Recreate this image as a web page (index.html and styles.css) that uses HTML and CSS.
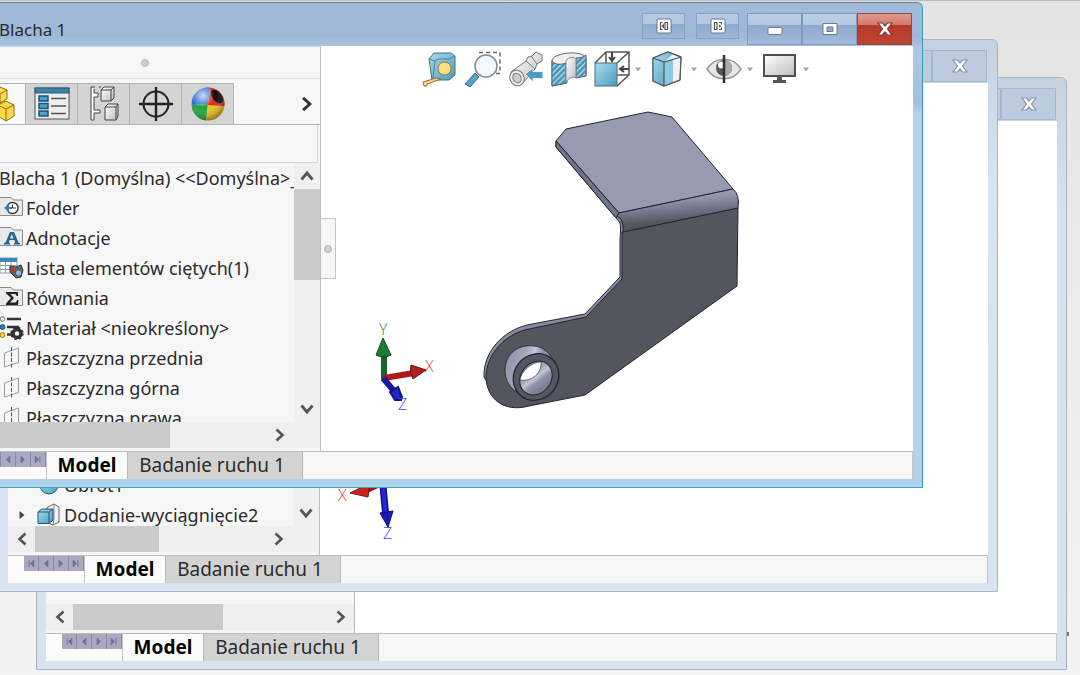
FILE: index.html
```html
<!DOCTYPE html>
<html lang="pl">
<head>
<meta charset="utf-8">
<meta name="viewport" content="width=device-width, initial-scale=1">
<title>Blacha 1</title>
<link rel="stylesheet" href="styles.css">
</head>
<body>
<svg class="defs" aria-hidden="true">
  <defs>
    <linearGradient id="bend" x1="0" y1="0" x2=".22" y2="1"><stop offset=".3" stop-color="#9599af"/><stop offset=".62" stop-color="#6d7083"/><stop offset=".82" stop-color="#53555f"/></linearGradient>
    <linearGradient id="tube" x1="0" y1=".3" x2="1" y2=".6"><stop offset="0" stop-color="#8f94ab"/><stop offset=".35" stop-color="#a4a8bc"/><stop offset=".5" stop-color="#c3c6d2"/><stop offset=".65" stop-color="#8f93a8"/><stop offset="1" stop-color="#75788b"/></linearGradient>
    <linearGradient id="blue" x1="0" y1="0" x2="1" y2="1"><stop offset="0" stop-color="#a9dcf0"/><stop offset="1" stop-color="#4c9abd"/></linearGradient>
    <linearGradient id="grey" x1="0" y1="0" x2="1" y2="1"><stop offset="0" stop-color="#ffffff"/><stop offset="1" stop-color="#bcbcbc"/></linearGradient>
    <radialGradient id="shine" cx=".35" cy=".25" r=".8"><stop offset="0" stop-color="#fff" stop-opacity=".75"/><stop offset=".45" stop-color="#fff" stop-opacity="0"/><stop offset="1" stop-color="#000" stop-opacity=".45"/></radialGradient>
    <pattern id="hatch" width="4" height="4" patternUnits="userSpaceOnUse" patternTransform="rotate(45)"><rect width="4" height="4" fill="#4b94b8"/><rect width="1.3" height="4" fill="#b7e0f0"/></pattern>
  </defs>
  <symbol id="i-right" viewBox="0 0 16 16"><path d="M4.500 2.500 10.500 8 4.500 13.500" fill="none" stroke="currentColor" stroke-width="2.600"/></symbol>
  <symbol id="i-left" viewBox="0 0 16 16"><path d="M11.500 2.500 5.500 8 11.500 13.500" fill="none" stroke="currentColor" stroke-width="2.600"/></symbol>
  <symbol id="i-up" viewBox="0 0 16 16"><path d="M2.500 11.500 8 5 13.500 11.500" fill="none" stroke="currentColor" stroke-width="2.800"/></symbol>
  <symbol id="i-down" viewBox="0 0 16 16"><path d="M2.500 4.500 8 11 13.500 4.500" fill="none" stroke="currentColor" stroke-width="2.800"/></symbol>
  <symbol id="i-drop" viewBox="0 0 8 5"><path d="M1 .5h6L4 4.500z" fill="#a3a3a3"/></symbol>
  <symbol id="i-first" viewBox="0 0 15 15"><path d="M5.500 4v7M10.500 4 7 7.500l3.500 3.500z" fill="#71718f" stroke="#71718f"/></symbol>
  <symbol id="i-prev" viewBox="0 0 15 15"><path d="M9.500 4 6 7.500 9.500 11z" fill="#71718f" stroke="#71718f"/></symbol>
  <symbol id="i-next" viewBox="0 0 15 15"><path d="M5.500 4 9 7.500 5.500 11z" fill="#71718f" stroke="#71718f"/></symbol>
  <symbol id="i-last" viewBox="0 0 15 15"><path d="M9.500 4v7M4.500 4 8 7.500 4.500 11z" fill="#71718f" stroke="#71718f"/></symbol>
  <symbol id="i-close" viewBox="0 0 18 16"><path d="M2 2h4.500L9 5l2.500-3H16l-4.500 6 4.500 6h-4.500L9 11l-2.500 3H2l4.500-6z" fill="#fff" stroke="currentColor" stroke-width="1.200"/></symbol>
  <symbol id="i-folder" viewBox="0 0 24 22"><path d="M-2 3V1.500h13L13.500 4H22.500V19.500H-2z" fill="#e9e9e9" stroke="#8a8a8a"/></symbol>
  <symbol id="i-plane" viewBox="0 0 24 24"><path d="M4.500 7 18.500 2v14.500l-14 4.500z" fill="none" stroke="#999"/><path d="M11.500 1v21" stroke="#555" stroke-dasharray="4 1.500"/></symbol>
</svg>

<main class="desktop">
  <i class="speck"></i>
  <section class="window window-back" aria-label="Okno 3">
    <header class="titlebar">
      <div class="win-buttons"><button class="win-btn" aria-label="Minimalizuj"></button><button class="win-btn" aria-label="Maksymalizuj"></button><button class="win-btn" aria-label="Zamknij"><svg class="x-icon"><use href="#i-close"/></svg></button></div>
    </header>
    <div class="body">
      <aside class="side">
        <div class="fill"></div>
        <div class="hscroll">
          <button class="arrow" aria-label="W lewo"><svg><use href="#i-left"/></svg></button><div class="track"><div class="thumb thumb-long"></div></div><button class="arrow" aria-label="W prawo"><svg><use href="#i-right"/></svg></button>
        </div>
      </aside>
      <div class="canvas"></div>
    </div>
    <footer class="tabs">
      <div class="nav"><button aria-label="Pierwsza"><svg><use href="#i-first"/></svg></button><button aria-label="Poprzednia"><svg><use href="#i-prev"/></svg></button><button aria-label="Następna"><svg><use href="#i-next"/></svg></button><button aria-label="Ostatnia"><svg><use href="#i-last"/></svg></button></div>
      <button class="tab tab-on">Model</button><button class="tab">Badanie ruchu 1</button>
    </footer>
  </section>

  <section class="window window-mid" aria-label="Okno 2">
    <header class="titlebar">
      <div class="win-buttons"><button class="win-btn" aria-label="Minimalizuj"></button><button class="win-btn" aria-label="Maksymalizuj"></button><button class="win-btn" aria-label="Zamknij"><svg class="x-icon"><use href="#i-close"/></svg></button></div>
    </header>
    <div class="body">
      <aside class="side">
        <div class="tree-area">
          <ul class="tree tree-end">
            <li><span class="twist"></span><svg class="icon" viewBox="0 0 24 24"><circle cx="12" cy="12" r="9" fill="url(#blue)" stroke="#235b75"/><ellipse cx="12" cy="10" rx="4" ry="3" fill="#dff2fa"/></svg>Obrót1</li>
            <li><span class="twist"><svg viewBox="0 0 8 10"><path d="M1.500 1 6.500 5 1.500 9z" fill="#444"/></svg></span><svg class="icon" viewBox="0 0 24 24"><path d="M10 4.500 17 1l5 3v15l-6 3-6-3z" fill="#f5f5f5" stroke="#666"/><path d="M17 1v15l-1 6" fill="none" stroke="#888"/><path d="M1 9l4-3h11v11l-4 3.500H1z" fill="url(#blue)" stroke="#235b75"/><path d="M1 9h11v11M12 9l4-3" fill="none" stroke="#235b75"/></svg>Dodanie-wyciągnięcie2</li>
          </ul>
          <div class="vscroll"><span class="vspace"></span><button class="arrow-v" aria-label="W dół"><svg><use href="#i-down"/></svg></button></div>
        </div>
        <div class="hscroll">
          <button class="arrow" aria-label="W lewo"><svg><use href="#i-left"/></svg></button><div class="track"><div class="thumb"></div></div><button class="arrow" aria-label="W prawo"><svg><use href="#i-right"/></svg></button>
        </div>
      </aside>
      <div class="canvas canvas-mid">
        <svg class="triad" viewBox="0 0 80 80" role="img" aria-label="Układ osi">
          <path d="M62 8 40 18" stroke="#a01414" stroke-width="6"/><path d="M50 8 30 18 48 22z" fill="#cf2020" stroke="#7c1010"/>
          <path d="M62 0 66 43" stroke="#101080" stroke-width="7"/><path d="M62 0 66 43" stroke="#2525e0" stroke-width="4"/><path d="M60 38 73 36 68 52z" fill="#1b1bb0" stroke="#0c0c68"/>
          <text x="18" y="26" class="axis" fill="#e03a3a">X</text><text x="63" y="64" class="axis" fill="#4545e8">Z</text>
        </svg>
      </div>
    </div>
    <footer class="tabs">
      <div class="nav"><button aria-label="Pierwsza"><svg><use href="#i-first"/></svg></button><button aria-label="Poprzednia"><svg><use href="#i-prev"/></svg></button><button aria-label="Następna"><svg><use href="#i-next"/></svg></button><button aria-label="Ostatnia"><svg><use href="#i-last"/></svg></button></div>
      <button class="tab tab-on">Model</button><button class="tab">Badanie ruchu 1</button>
    </footer>
  </section>

  <section class="window window-front" aria-label="Blacha 1">
    <header class="titlebar">
      <h1 class="title">Blacha 1</h1>
      <div class="pane-buttons">
        <button class="pane-btn" aria-label="Panel lewy"><svg viewBox="0 0 16 16"><rect x="1" y="1" width="14" height="14" rx="1" fill="#fff" stroke="#6f7684"/><path d="M6.500 4.500H4.500v7h2M9 4.500h2.500v7H9z" fill="none" stroke="#555" stroke-width="1.200"/><path d="M8 5.500 5.500 8 8 10.500z" fill="#555"/></svg></button>
        <button class="pane-btn" aria-label="Panel prawy"><svg viewBox="0 0 16 16"><rect x="1" y="1" width="14" height="14" rx="1" fill="#fff" stroke="#6f7684"/><path d="M4.500 4.500H7v7H4.500zM9 4.500h2.500v2M9 11.500h2.500v-2" fill="none" stroke="#555" stroke-width="1.200"/><path d="M9 6.500 11.500 8 9 9.500z" fill="#555"/></svg></button>
      </div>
      <div class="win-buttons">
        <button class="win-btn" aria-label="Minimalizuj"><svg class="min-icon" viewBox="0 0 16 16"><rect x="1" y="6.500" width="14" height="7" rx="1" fill="#fff" stroke="#6f7684"/></svg></button>
        <button class="win-btn" aria-label="Maksymalizuj"><svg class="min-icon" viewBox="0 0 16 16"><path fill-rule="evenodd" d="M1 2.500h14v11H1zM5 6v4.500h6V6z" fill="#fff" stroke="#6f7684"/></svg></button>
        <button class="win-btn win-close" aria-label="Zamknij"><svg class="x-icon"><use href="#i-close"/></svg></button>
      </div>
    </header>
    <div class="body">
      <aside class="side">
        <div class="grip"><i class="dot"></i></div>
        <div class="managers">
          <button class="manager manager-on" aria-label="Drzewo operacji"><svg viewBox="0 0 38 38"><g fill="#ffd84a" stroke="#8c6a0c"><path d="M11 5l7-3 7 3v9l-7 4-7-4z"/><path d="M11 5l7 4 7-4M18 9v9" fill="none"/><path d="M16 20l8-4 8 4v11l-8 5-8-5z"/><path d="M16 20l8 4 8-4M24 24v12" fill="none"/></g></svg></button>
          <button class="manager" aria-label="Właściwości"><svg viewBox="0 0 38 38"><rect x="2" y="3" width="34" height="31" fill="#eee" stroke="#555"/><rect x="2" y="3" width="34" height="5" fill="#3e83a6" stroke="#2c5d77"/><g fill="#4aa3cd" stroke="#1d5370" stroke-width="1.500"><rect x="6" y="11" width="9" height="5"/><rect x="6" y="18.500" width="9" height="5"/><rect x="6" y="26" width="9" height="5"/></g><path d="M18 13.500h15M18 21h15M18 28.500h15" stroke="#555" stroke-width="1.500"/></svg></button>
          <button class="manager" aria-label="Konfiguracje"><svg viewBox="0 0 38 38"><path d="M6 2h4M14 2h2M6 2v33h3v-7h6v-3H9V12h4V8H9V4" fill="#fff" stroke="#444"/><g fill="url(#grey)" stroke="#444"><path d="M16 5l3-3h10v11l-3 3H16z"/><path d="M16 5h10v11M26 5l3-3" fill="none"/><path d="M20 22l3-3h10v12l-2 4H20z"/><path d="M20 22h11v13M31 22l2-3" fill="none"/></g></svg></button>
          <button class="manager" aria-label="Wymiary"><svg viewBox="0 0 38 38"><circle cx="19" cy="19" r="12.500" fill="none" stroke="#222" stroke-width="2"/><path d="M19 2v34M2 19h34" stroke="#222" stroke-width="2.400"/></svg></button>
          <button class="manager" aria-label="Wygląd"><svg viewBox="0 0 38 38"><path d="M19 19 21 2.500A16.500 16.500 0 0 0 2.500 20z" fill="#2a6fd6"/><path d="M19 19 2.500 20A16.500 16.500 0 0 0 17 35.500z" fill="#1fa33a"/><path d="M19 20 17 35.500A16.500 16.500 0 0 0 35.500 20z" fill="#f0c322"/><path d="M19 20 21 2.500A16.500 16.500 0 0 1 35.500 21z" fill="#d62820"/><ellipse cx="28" cy="11.500" rx="4.500" ry="8" transform="rotate(-40 28 11.500)" fill="#120606"/><circle cx="19" cy="19" r="16.500" fill="url(#shine)"/></svg></button>
          <button class="more" aria-label="Więcej"><svg><use href="#i-right"/></svg></button>
        </div>
        <div class="filter"></div>
        <div class="tree-area">
          <ul class="tree">
            <li class="root">Blacha 1 (Domyślna) &lt;&lt;Domyślna&gt;_</li>
            <li><svg class="icon" viewBox="0 0 24 24"><use href="#i-folder" width="24" height="22"/><circle cx="12.500" cy="12" r="5.500" fill="#fff" stroke="#333" stroke-width="1.400"/><path d="M12.500 8.500V12H16" fill="none" stroke="#333"/><path d="M4 12l5-4v3h3v2H9v3z" fill="#2f86b0"/></svg>Folder</li>
            <li><svg class="icon" viewBox="0 0 24 24"><use href="#i-folder" width="24" height="22"/><path fill-rule="evenodd" d="M4 18.500v-1.500l1.500-.5L10 6h4l4.500 10.500 1.500.5v1.500h-6V17l1.200-.5-.8-2.500H9.500l-.7 2.500L10 17v1.500zM10 12.500h3.600L11.800 8z" fill="#24678a"/></svg>Adnotacje</li>
            <li><svg class="icon" viewBox="0 0 24 24"><rect x="0" y="2" width="17" height="15" fill="#fff" stroke="#8ba0ad"/><rect x="0" y="2" width="17" height="4" fill="#3f8ab3"/><path d="M0 9.500h17M0 13.500h17M5.500 6v11M11 6v11" stroke="#8ba0ad"/><path d="M10 10l6 1 5-2 2 5-2 7-5 1-6-6z" fill="#5c6470" stroke="#333"/><path d="M11 10.500l5 1-1 6-4-3z" fill="#b8402c"/><circle cx="18.500" cy="17" r="2.500" fill="#88bed8"/></svg>Lista elementów ciętych(1)</li>
            <li><svg class="icon" viewBox="0 0 24 24"><use href="#i-folder" width="24" height="22"/><path d="M6 6h12v4h-1.500c-.3-1.500-.8-2-2.500-2h-3.500l3.500 4-4 4.500h4c2 0 2.500-.6 3-2.500H18.500L18 19H6v-1.500l5-5.500-5-4.800z" fill="#222"/></svg>Równania</li>
            <li><svg class="icon" viewBox="0 0 24 24"><path d="M7 3h14M7 11h12M7 18.500h6" stroke="#333" stroke-width="2.600"/><circle cx="2.500" cy="3" r="2.300" fill="#eee" stroke="#777"/><circle cx="2.500" cy="11" r="2.500" fill="#2d86b5" stroke="#1d5370"/><circle cx="2.500" cy="19" r="2.500" fill="#ffd23a" stroke="#a77e10"/><circle cx="17" cy="17.500" r="4" fill="none" stroke="#333" stroke-width="3.500"/><circle cx="17" cy="17.500" r="5.700" fill="none" stroke="#333" stroke-width="2" stroke-dasharray="2.300 2.200"/></svg>Materiał &lt;nieokreślony&gt;</li>
            <li><svg class="icon"><use href="#i-plane"/></svg>Płaszczyzna przednia</li>
            <li><svg class="icon"><use href="#i-plane"/></svg>Płaszczyzna górna</li>
            <li><svg class="icon"><use href="#i-plane"/></svg>Płaszczyzna prawa</li>
          </ul>
          <div class="vscroll"><button class="arrow-v" aria-label="W górę"><svg><use href="#i-up"/></svg></button><div class="vthumb"></div><span class="vspace"></span><button class="arrow-v" aria-label="W dół"><svg><use href="#i-down"/></svg></button></div>
        </div>
        <div class="hscroll">
          <button class="arrow" aria-label="W lewo"><svg><use href="#i-left"/></svg></button><div class="track"><div class="thumb thumb-wide"></div></div><button class="arrow" aria-label="W prawo"><svg><use href="#i-right"/></svg></button>
        </div>
      </aside>
      <div class="canvas">
        <button class="collapse" aria-label="Zwiń panel"><i class="dot"></i></button>
        <div class="toolbar">
          <button class="tool" aria-label="Zmierz"><svg viewBox="0 0 36 36"><path d="M7 8l5-6h17l4 3v19l-6 5H10z" fill="url(#blue)" stroke="#4e6c7a"/><path d="M7 8l6 2 3-2h11l6-3M13 10l-2 17" fill="none" stroke="#4e7f96"/><path d="M1 31l13-4 5 1-14 5v2H2z" fill="#ffd86b" stroke="#857047"/><circle cx="22.500" cy="17.500" r="6.500" fill="#ffe182" stroke="#967a2d"/></svg></button>
          <button class="tool" aria-label="Powiększ obszar"><svg viewBox="0 0 36 36"><path d="M14 1.500h21v21H26" fill="none" stroke="#666" stroke-width="1.500" stroke-dasharray="4 3"/><path d="M10 22l4 4-9 10-5-3z" fill="#55a3c6" stroke="#3b6d85"/><circle cx="21" cy="15" r="11" fill="#f3fafd" stroke="#888" stroke-width="1.500"/></svg></button>
          <button class="tool" aria-label="Poprzedni widok"><svg viewBox="0 0 36 36"><path d="M3 21 18 10l2-4 4-1 4-4 6 3v6l-5 3-2 5-13 15-8 1z" fill="url(#grey)" stroke="#777"/><path d="M18 10l9 8M23 5l6 8" fill="none" stroke="#777"/><ellipse cx="9" cy="27" rx="7" ry="8" transform="rotate(-25 9 27)" fill="#eee" stroke="#777"/><ellipse cx="9" cy="27" rx="4" ry="5" transform="rotate(-25 9 27)" fill="#ccc" stroke="#777"/><path d="M17 23l8-6v3.500h10v7H25V31z" fill="#4d9bc0" stroke="#e8f4f9"/></svg></button>
          <button class="tool" aria-label="Widok przekroju"><svg viewBox="0 0 36 36"><path d="M1 9C4 1 32-1 35 7v18l-10 1V12h-9v20L1 35z" fill="#eee" stroke="#666"/><path d="M1 10c3 4 9 4 14 2v20L1 35z" fill="url(#hatch)" stroke="#4c6c7c"/><path d="M25 7c4 0 8-1 10-3v21l-10 2z" fill="url(#hatch)" stroke="#4c6c7c"/><path d="M15 12c-1-6 9-7 10-4v19c-3-2-7 0-10 4z" fill="url(#grey)" stroke="#888"/></svg></button>
          <button class="tool" aria-label="Orientacja widoku"><svg viewBox="0 0 36 36"><path d="M1 12 12 1h23v23L23 35M12 1v11M35 1 23 12M23 24h12" fill="none" stroke="#555" stroke-width="1.500"/><rect x="1" y="12" width="22" height="23" fill="url(#blue)" stroke="#4e6c7a"/><path d="M18 1v8m-3-3 3 4 3-4M35 18h-8m3-3-4 3 4 3" fill="none" stroke="#444" stroke-width="2"/></svg></button>
          <button class="drop" aria-label="Lista orientacji"><svg><use href="#i-drop"/></svg></button>
          <button class="tool" aria-label="Styl wyświetlania"><svg viewBox="0 0 36 36"><path d="M3 7 18 1l13 5-1 23-16 6L3 30z" fill="#f1f1f4" stroke="#555"/><path d="M3 7 18 1l5 2-9 8v24L3 30z" fill="url(#blue)"/><path d="M14 11 23 8v24l-9 3z" fill="#8bc9e2"/><path d="M3 7 18 1l13 5-1 23-16 6L3 30zM3 7l11 4 17-5M14 11v24" fill="none" stroke="#4e5c64" stroke-width="1.200"/></svg></button>
          <button class="drop" aria-label="Lista stylów"><svg><use href="#i-drop"/></svg></button>
          <button class="tool" aria-label="Ukryj lub pokaż elementy"><svg viewBox="0 0 36 36"><path d="M1 18C9 5 27 5 35 18 27 31 9 31 1 18z" fill="#e6e6e6" stroke="#999" stroke-width="1.500"/><circle cx="18" cy="17" r="8" fill="#565656"/><circle cx="15.500" cy="14" r="3.500" fill="#fff"/><path d="M18 9a8 8 0 0 1 0 16z" fill="#aaa"/><path d="M18 4v28" stroke="#333" stroke-width="2.500"/></svg></button>
          <button class="drop" aria-label="Lista elementów"><svg><use href="#i-drop"/></svg></button>
          <button class="tool" aria-label="Ustawienia widoku"><svg viewBox="0 0 36 36"><rect x="2" y="4" width="31" height="21" fill="url(#grey)" stroke="#505050" stroke-width="2"/><path d="M15 25h5v4h4v3H11v-3h4z" fill="#555"/></svg></button>
          <button class="drop" aria-label="Lista ustawień"><svg><use href="#i-drop"/></svg></button>
        </div>
        <svg class="model" viewBox="321 92 592 358" preserveAspectRatio="xMinYMin meet" role="img" aria-label="Model blachy">
          <g stroke="#23242c" stroke-linejoin="round">
            <path d="M556 141 556 147 617 219 620 223Q621 227 620 240V277L585 314 527 325C503 331 483 352 484 377L492 390 530 332 588 320 624 279 625 232 619 212z" fill="#878ba1"/>
            <path d="M556 141 566 129 648 112 672 117 733 189 619 213z" fill="#979bb1"/>
            <path d="M556 141 619 213 616 218 556 147z" fill="#70748a"/>
            <path d="M622 232 738 208 737 286 585 395 529 406C503 413 487 398 486 378 486 353 507 333 529 329L586 317 622 279z" fill="#53555f"/>
            <path d="M619 213 733 189Q740 195 738 208L623 232Q624 219 617 216z" fill="url(#bend)"/>
            <path d="M505 371C505 352 520 344 534 346 543 347 549 352 554 361L530 399 515 391Q505 383 505 371z" fill="url(#tube)" stroke-width=".8"/>
            <ellipse cx="536" cy="377" rx="22" ry="24" transform="rotate(38 536 377)" fill="#555762" stroke-width="1.300"/>
            <ellipse cx="536" cy="378" rx="15" ry="18" transform="rotate(38 536 378)" fill="url(#tube)"/>
            <path d="M541 362C532 362 521 371 520 380 532 382 542 373 541 362z" fill="#fff" stroke-width=".6"/>
          </g>
          <path d="M384 379V351" stroke="#14662b" stroke-width="6"/><path d="M376 355 383 338 391 355Q383 359 376 355z" fill="#1b7a37" stroke="#0e4d20"/>
          <path d="M384 378 414 373" stroke="#b01818" stroke-width="6"/><path d="M411 365 426 370 413 379Q409 372 411 365z" fill="#b32020" stroke="#6b0f0f"/>
          <path d="M383 378 394 391" stroke="#1717a8" stroke-width="6"/><path d="M390 392 398 387 402 397 401 400 395 400z" fill="#2222cc" stroke="#11117e" stroke-width="2"/>
          <text x="379" y="335" class="axis" fill="#2c8c48">Y</text><text x="425" y="372" class="axis" fill="#e34444">X</text><text x="398" y="410" class="axis" fill="#4848ee">Z</text>
        </svg>
      </div>
    </div>
    <footer class="tabs">
      <div class="nav"><button aria-label="Pierwsza"><svg><use href="#i-first"/></svg></button><button aria-label="Poprzednia"><svg><use href="#i-prev"/></svg></button><button aria-label="Następna"><svg><use href="#i-next"/></svg></button><button aria-label="Ostatnia"><svg><use href="#i-last"/></svg></button></div>
      <button class="tab tab-on">Model</button><button class="tab">Badanie ruchu 1</button>
    </footer>
  </section>
</main>
</body>
</html>
```
FILE: styles.css
```css
* { box-sizing: border-box; }
body {
  margin: 0;
  font-family: "Noto Sans", "Open Sans", sans-serif;
  font-size: 18px;
  color: #2b2b2b;
}
button {
  margin: 0;
  padding: 0;
  border: 0;
  background: none;
  font: inherit;
  color: inherit;
}
svg { display: block; flex: none; }
.defs { position: absolute; width: 0; height: 0; }

.desktop {
  position: relative;
  height: 100vh;
  overflow: hidden;
  border-top: 1px solid #bdbdbd;
  background: linear-gradient(#e3e3e3, #f3f3f3);
}
.speck {
  position: absolute;
  right: 11px;
  bottom: 39px;
  width: 3px;
  height: 4px;
  background: #7a7a7a;
}

/* Windows */
.window {
  position: absolute;
  display: flex;
  flex-direction: column;
  padding: 0 9px 8px;
  border: 1px solid #aeb4bf;
  border-radius: 6px 6px 0 0;
  background: linear-gradient(#c3d1e1, #d5e3f2 140px, #d7e3f1);
}
.window-back { left: 36px; right: 13px; top: 76px; bottom: 5px; }
.window-mid { left: -2px; right: 82px; top: 38px; bottom: 83px; }
.window-front {
  left: -40px;
  right: 157px;
  top: 1px;
  bottom: 187px;
  border-color: #6a7f99 #3a99aa #4d9fb8;
  background: linear-gradient(#a2bad9 0, #9fb8d8 34px, #afc9e8 46px, #a3bddc 100px, #bacfea 110px, #b9cfea 97%, #a9d5ee);
}
.titlebar {
  display: flex;
  flex: none;
  height: 43px;
  padding-left: 29px;
}
.title {
  flex: 1;
  margin: 0;
  padding-top: 9px;
  font-size: 17px;
  line-height: 36px;
  font-weight: 400;
}
.win-buttons { display: flex; height: 32px; margin: 10px 1px 0 auto; }
.win-btn {
  display: grid;
  place-items: center;
  width: 55px;
  border: 1px solid #a6b5cb;
  background: #bccbdd;
  color: #8a93a3;
}
.x-icon { width: 18px; height: 16px; }
.window-front .win-btn {
  border-color: #8298b9;
  background: linear-gradient(#bdcfe8 0, #b3c8e4 36%, #8ea9cd 38%, #a1bbdc);
}
.window-front .win-close {
  border-color: #96473f;
  background: linear-gradient(#e0998e 0, #d5796c 36%, #b93a29 38%, #bd4531);
  color: #7d3a34;
}
.min-icon { width: 16px; height: 16px; }
.pane-buttons { display: flex; gap: 11px; margin: 10px 8px 0 0; }
.pane-btn {
  display: grid;
  place-items: center;
  width: 43px;
  height: 26px;
  border: 1px solid #8ba0c0;
  background: linear-gradient(#b7cae5 0, #b3c8e4 42%, #8eaad0 44%, #9db8db);
}
.pane-btn svg { width: 16px; height: 16px; }

.body { display: flex; flex: 1; min-height: 0; }
.side {
  display: flex;
  flex-direction: column;
  flex: none;
  width: 312px;
  padding-bottom: 3px;
  border-right: 1px solid #bdbdbd;
  background: #f6f6f7;
}
.window-back .side { width: 309px; }
.window-front .side { width: 351px; border-top: 1px solid #cdd8e6; }
.fill { flex: 1; }
.canvas { position: relative; flex: 1; min-width: 0; background: #fff; }

/* Feature manager */
.grip {
  display: flex;
  justify-content: center;
  align-items: center;
  height: 32px;
  border-bottom: 1px solid #dcdcdc;
}
.dot {
  width: 8px;
  height: 8px;
  border: 1px solid #b3b3b3;
  border-radius: 50%;
  background: #cfcfcf;
}
.managers {
  display: flex;
  flex: none;
  height: 46px;
  padding-top: 4px;
  border-bottom: 1px solid #b5b5b5;
}
.manager {
  display: grid;
  place-items: center;
  width: 52px;
  border: solid #b2b2b2;
  border-width: 1px 1px 0 0;
  background: #d4d4d4;
}
.manager svg { width: 38px; height: 38px; }
.manager-on { width: 56px; background: #f8f8f8; }
.manager-on svg { justify-self: end; margin-right: 5px; }
.more { display: grid; place-items: center; width: 24px; margin: 0 1px 0 auto; color: #333; }
.more svg { width: 18px; height: 18px; }
.filter {
  flex: none;
  height: 38px;
  margin-right: 2px;
  border: solid #d3d3d3;
  border-width: 0 1px 1px 0;
}
.tree-area { display: flex; flex: 1; min-height: 0; }
.tree {
  flex: 1;
  min-width: 0;
  margin: 0;
  padding: 0 0 0 30px;
  overflow: hidden;
  list-style: none;
  line-height: 30px;
  white-space: nowrap;
}
.tree li { display: flex; align-items: center; height: 30px; }
.tree .root { margin-left: -1px; }
.icon { width: 24px; height: 24px; margin-right: 2px; }
.tree-end {
  display: flex;
  flex-direction: column;
  justify-content: flex-end;
  padding-left: 10px;
}
.tree-end li { flex: none; }
.tree-end li:last-child { margin-bottom: -4px; }
.tree-end .icon { margin-right: 3px; }
.twist { width: 19px; }
.twist svg { width: 8px; height: 10px; }
.vscroll { display: flex; flex-direction: column; flex: none; width: 26px; background: #efefef; }
.arrow-v { display: grid; place-items: center; height: 26px; color: #555; }
.arrow-v svg, .arrow svg { width: 16px; height: 16px; }
.vthumb { height: 91px; background: #cbcbcb; }
.vspace { flex: 1; }
.hscroll {
  display: flex;
  flex: none;
  height: 26px;
  padding-right: 27px;
  background: #efefef;
}
.window-back .hscroll { padding-right: 0; }
.arrow { display: grid; place-items: center; width: 27px; color: #555; }
.track { flex: 1; }
.thumb { width: 124px; height: 100%; background: #cbcbcb; }
.thumb-long { width: 150px; }
.thumb-wide { width: 173px; }

/* Sheet tabs */
.tabs {
  display: flex;
  flex: none;
  height: 28px;
  border-top: 1px solid #bdbdbd;
  border-right: 1px solid #c8c8c8;
  background: #f6f6f7;
}
.nav { display: flex; width: 77px; padding-left: 16px; border-right: 1px solid #c4c4c4; background: #fbfbfb; }
.nav button { width: 15px; height: 15px; border-right: 1px solid #8888a2; background: #a8a8c0; }
.nav svg { width: 14px; height: 15px; }
.tab {
  width: 175px;
  padding-right: 6px;
  border-right: 1px solid #b8b8b8;
  background: #d3d3d3;
  font-size: 19px;
  line-height: 27px;
}
.tab-on { width: 81px; padding-right: 0; background: #fafafa; color: #000; font-weight: 700; }

/* Graphics area */
.toolbar {
  display: flex;
  align-items: center;
  height: 46px;
  padding-left: 101px;
}
.tool { width: 36px; height: 36px; margin-right: 7px; }
.tool svg { width: 36px; height: 36px; }
.drop { width: 8px; margin: 0 8px 0 -3px; }
.drop svg { width: 8px; height: 5px; }
.model { width: 100%; height: auto; }
.collapse {
  position: absolute;
  left: 0;
  top: 172px;
  display: grid;
  place-items: center;
  width: 15px;
  height: 61px;
  border: 1px solid #c4c4c4;
  border-left: 0;
  background: #f6f6f6;
}
.axis { font-family: "Open Sans", sans-serif; font-size: 16px; font-weight: 300; }
.canvas-mid { display: flex; align-items: flex-end; }
.triad { width: 80px; height: 80px; }
```
